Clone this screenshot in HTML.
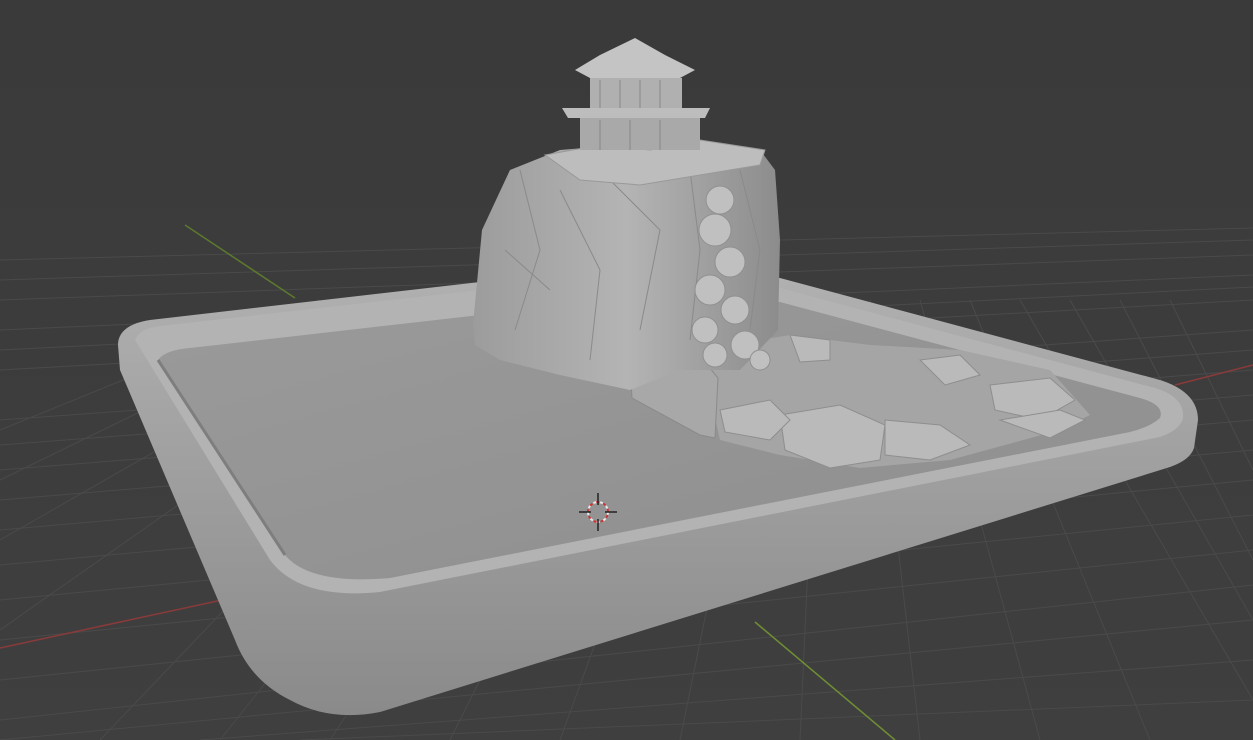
<!DOCTYPE html>
<html><head><meta charset="utf-8"><style>
html,body{margin:0;padding:0;background:#3d3d3d;overflow:hidden}
svg{display:block}
</style></head><body>
<svg width="1253" height="740" viewBox="0 0 1253 740" xmlns="http://www.w3.org/2000/svg">
<defs>
<linearGradient id="bg" x1="0" y1="0" x2="0" y2="1">
<stop offset="0" stop-color="#3a3a3a"/><stop offset="1" stop-color="#3f3f3f"/></linearGradient>
<linearGradient id="rim" x1="0" y1="0" x2="0" y2="1">
<stop offset="0" stop-color="#b0b0b0"/><stop offset="1" stop-color="#8a8a8a"/></linearGradient>
<linearGradient id="floor" x1="0" y1="0" x2="1" y2="1">
<stop offset="0" stop-color="#9a9a9a"/><stop offset="1" stop-color="#8e8e8e"/></linearGradient>
<linearGradient id="rock" x1="0" y1="0" x2="1" y2="0">
<stop offset="0" stop-color="#9c9c9c"/><stop offset="0.5" stop-color="#b4b4b4"/><stop offset="1" stop-color="#8c8c8c"/></linearGradient>
</defs>
<rect width="1253" height="740" fill="url(#bg)"/>
<g stroke="#4a4a4a" stroke-width="1" fill="none">
<path d="M0 420 L1253 330 M0 445 L1253 350 M0 470 L1253 370 M0 500 L1253 395 M0 530 L1253 420 M0 565 L1253 450 M0 600 L1253 480 M0 640 L1253 515 M0 680 L1253 550 M0 720 L1253 585 M0 740 L1253 620 M200 740 L1253 660 M300 740 L1253 700 M0 370 L1253 300 M0 350 L1253 287 M0 330 L1253 275 M0 300 L1253 255 M0 280 L1253 240 M0 260 L1253 228"/>
<path d="M0 540 L420 300 M0 630 L470 300 M100 740 L520 300 M220 740 L570 300 M330 740 L620 300 M450 740 L670 300 M560 740 L720 300 M680 740 L770 300 M800 740 L820 300 M920 740 L870 300 M1040 740 L920 300 M1150 740 L970 300 M1253 700 L1020 300 M1253 620 L1070 300 M1253 560 L1120 300 M1253 470 L1170 300 M0 430 L320 300 M0 480 L370 300"/>
</g>
<path d="M185 225 L295 298" stroke="#5c7a2e" stroke-width="1.5"/>
<path d="M755 622 L895 740" stroke="#6f8f33" stroke-width="1.5"/>
<path d="M0 648 L222 600" stroke="#8a3a3a" stroke-width="1.5"/>
<path d="M1175 385 L1253 365" stroke="#8a3a3a" stroke-width="1.5"/>
<path d="M118 345 Q118 325 150 320 L480 282 L780 278 L1160 380 Q1198 392 1198 420 L1194 448 Q1190 460 1170 467 L380 712 Q330 722 290 700 Q250 680 235 640 L120 370 Z" fill="url(#rim)"/>
<path d="M135 340 Q140 328 160 326 L480 290 L780 288 L1155 388 Q1185 397 1183 418 Q1180 430 1160 437 L380 592 Q300 600 270 560 Z" fill="#b3b3b3"/>
<path d="M158 360 Q165 350 190 348 L480 315 L780 302 L1140 398 Q1165 405 1160 418 Q1150 427 1130 432 L390 578 Q310 585 285 555 Z" fill="url(#floor)"/>
<path d="M158 360 L285 555" stroke="#7e7e7e" stroke-width="3"/>
<path d="M700 350 L790 335 L870 345 L960 350 L1050 370 L1090 415 L1060 430 L950 460 L860 468 L780 455 L720 440 Z" fill="#a5a5a5"/>
<g fill="#bababa" stroke="#8e8e8e" stroke-width="1">
<path d="M780 415 L840 405 L885 425 L880 460 L830 468 L785 450 Z"/>
<path d="M720 410 L770 400 L790 420 L770 440 L725 432 Z"/>
<path d="M885 420 L940 425 L970 445 L930 460 L885 455 Z"/>
<path d="M990 385 L1050 378 L1075 400 L1040 420 L995 410 Z"/>
<path d="M920 360 L960 355 L980 375 L945 385 Z"/>
<path d="M790 335 L830 340 L830 360 L800 362 Z"/>
<path d="M1000 420 L1060 410 L1085 420 L1050 438 Z"/>
</g>
<path d="M630 362 L705 362 L718 378 L715 438 L700 435 L632 398 Z" fill="#a8a8a8" stroke="#8a8a8a"/>
<path d="M473 325 L482 230 L510 170 L560 150 L660 142 L760 150 L775 170 L780 240 L778 330 L740 370 L680 370 L630 390 L560 375 L500 360 L475 345 Z" fill="url(#rock)"/>
<g fill="none" stroke="#8a8a8a" stroke-width="1">
<path d="M520 170 L540 250 L515 330 M560 190 L600 270 L590 360 M610 180 L660 230 L640 330 M690 170 L700 250 L690 340 M740 170 L760 250 L750 330 M505 250 L550 290"/>
</g>
<g fill="#c0c0c0" stroke="#909090">
<circle cx="720" cy="200" r="14"/><circle cx="715" cy="230" r="16"/><circle cx="730" cy="262" r="15"/><circle cx="710" cy="290" r="15"/><circle cx="735" cy="310" r="14"/><circle cx="705" cy="330" r="13"/><circle cx="745" cy="345" r="14"/><circle cx="715" cy="355" r="12"/><circle cx="760" cy="360" r="10"/>
</g>
<path d="M545 155 L600 145 L650 150 L700 140 L765 150 L760 165 L700 175 L640 185 L580 180 Z" fill="#bdbdbd" stroke="#999"/>
<rect x="580" y="115" width="120" height="35" fill="#a9a9a9"/>
<rect x="590" y="78" width="92" height="30" fill="#b0b0b0"/>
<path d="M562 108 L710 108 L705 118 L568 118 Z" fill="#bdbdbd"/>
<path d="M575 70 L600 55 L635 38 L665 55 L695 70 L680 78 L590 78 Z" fill="#c4c4c4"/>
<g stroke="#888" stroke-width="1"><path d="M600 80 V108 M620 80 V108 M640 80 V108 M660 80 V108 M600 120 V150 M630 120 V150 M660 120 V150"/></g>
<circle cx="598" cy="512" r="10" fill="none" stroke="#e8e8e8" stroke-width="2" stroke-dasharray="4 3"/>
<circle cx="598" cy="512" r="10" fill="none" stroke="#c33" stroke-width="2" stroke-dasharray="3 4" stroke-dashoffset="4"/>
<path d="M598 493 V505 M598 519 V531 M579 512 H591 M605 512 H617" stroke="#222" stroke-width="1.5"/>
</svg>
</body></html>
